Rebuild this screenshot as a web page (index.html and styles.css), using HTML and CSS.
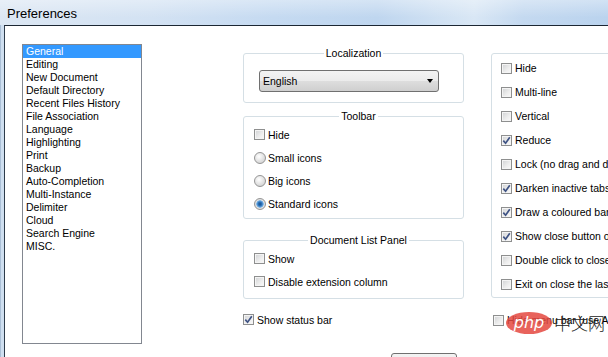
FILE: index.html
```html
<!DOCTYPE html>
<html lang="en">
  <head>
    <meta charset="UTF-8" />
    <title>Preferences</title>
    <link rel="stylesheet" href="styles.css">
  </head>
  <body>
    <div class="window">
      <div class="titlebar">Preferences</div>
      <div class="frame">
        <div class="client">
          <ul class="pages">
            <li class="current">General</li>
            <li>Editing</li>
            <li>New Document</li>
            <li>Default Directory</li>
            <li>Recent Files History</li>
            <li>File Association</li>
            <li>Language</li>
            <li>Highlighting</li>
            <li>Print</li>
            <li>Backup</li>
            <li>Auto-Completion</li>
            <li>Multi-Instance</li>
            <li>Delimiter</li>
            <li>Cloud</li>
            <li>Search Engine</li>
            <li>MISC.</li>
          </ul>

          <div class="col mid">
            <div class="group loc">
              <div class="caption">Localization</div>
              <div class="select">
                <span>English</span>
                <span class="arrow"></span>
              </div>
            </div>

            <div class="group toolbar">
              <div class="caption">Toolbar</div>
              <div class="row"><span class="cb"></span>Hide</div>
              <div class="row"><span class="rb"></span>Small icons</div>
              <div class="row"><span class="rb"></span>Big icons</div>
              <div class="row"><span class="rb on"></span>Standard icons</div>
            </div>

            <div class="group doclist">
              <div class="caption">Document List Panel</div>
              <div class="row"><span class="cb"></span>Show</div>
              <div class="row"><span class="cb"></span>Disable extension column</div>
            </div>

            <div class="row single"><span class="cb on"><svg viewBox="0 0 9 9"><path d="M1.3 4.6 L3.6 7.2 L7.8 1.3"/></svg></span>Show status bar</div>

            <div class="buttons"><button class="btn">Close</button></div>
          </div>

          <div class="col right">
            <div class="group tabbar">
              <div class="row"><span class="cb"></span>Hide</div>
              <div class="row"><span class="cb"></span>Multi-line</div>
              <div class="row"><span class="cb"></span>Vertical</div>
              <div class="row"><span class="cb on"><svg viewBox="0 0 9 9"><path d="M1.3 4.6 L3.6 7.2 L7.8 1.3"/></svg></span>Reduce</div>
              <div class="row"><span class="cb"></span>Lock (no drag and drop)</div>
              <div class="row"><span class="cb on"><svg viewBox="0 0 9 9"><path d="M1.3 4.6 L3.6 7.2 L7.8 1.3"/></svg></span>Darken inactive tabs</div>
              <div class="row"><span class="cb on"><svg viewBox="0 0 9 9"><path d="M1.3 4.6 L3.6 7.2 L7.8 1.3"/></svg></span>Draw a coloured bar on active tab</div>
              <div class="row"><span class="cb on"><svg viewBox="0 0 9 9"><path d="M1.3 4.6 L3.6 7.2 L7.8 1.3"/></svg></span>Show close button on each tab</div>
              <div class="row"><span class="cb"></span>Double click to close document</div>
              <div class="row"><span class="cb"></span>Exit on close the last tab</div>
            </div>
            <div class="row single"><span class="cb"></span>Hide menu bar (use Alt or F10 key to toggle)</div>
          </div>
        </div>
      </div>
    </div>

    <div class="watermark"><span class="php">php</span><span class="cn">中文网</span></div>
  </body>
</html>
```

FILE: styles.css
```css
body {
  margin: 0;
  width: 608px;
  height: 357px;
  overflow: hidden;
  font-family: "Liberation Sans", Arial, sans-serif;
  font-size: 10.5px;
  color: #000;
  background: #fff;
}

.window {
  width: 608px;
  height: 357px;
  overflow: hidden;
}

.titlebar {
  height: 25px;
  line-height: 27px;
  padding-left: 7px;
  font-size: 13px;
  color: #000;
  background:
    linear-gradient(to bottom, rgba(255, 255, 255, 0.35), rgba(255, 255, 255, 0) 70%),
    linear-gradient(to right, #dce7f3 0%, #d3e2f3 25%, #c5daf1 45%, #bfd6ef 62%, #d9e7f5 78%, #c4d9f0 86%, #bad3ee 100%);
}

.frame {
  background: linear-gradient(to right, #aabfd6 0, #aabfd6 1px, #cfdff0 1px);
  padding-left: 4px;
}

.client {
  display: flex;
  align-items: flex-start;
  height: 331px;
  padding: 18px 0 0 17px;
  background: #fff;
  border-left: 1px solid #2d3b4b;
  border-top: 1px solid #1c2733;
}

.pages {
  flex: none;
  list-style: none;
  margin: 0;
  padding: 0;
  width: 118px;
  height: 298px;
  border: 1px solid #828790;
  line-height: 13px;
}

.pages li {
  padding-left: 3px;
  white-space: nowrap;
}

.pages .current {
  background: #3399ff;
  color: #fff;
}

.col {
  flex: none;
  margin-top: 9px;
}

.mid {
  width: 221px;
  margin-left: 101px;
}

.right {
  width: 300px;
  margin-left: 27px;
}

.group {
  border: 1px solid #d5dfe5;
  border-radius: 3px;
}

.caption {
  display: table;
  margin: -7px auto 0;
  padding: 0 2px;
  line-height: 13px;
  background: #fff;
}

.loc {
  padding-bottom: 10px;
}

.select {
  display: flex;
  align-items: center;
  justify-content: space-between;
  box-sizing: border-box;
  width: 180px;
  height: 22px;
  margin: 10px 0 0 15px;
  padding: 0 4px 0 3px;
  border: 1px solid #707070;
  border-radius: 3px;
  background: linear-gradient(to bottom, #f3f3f3 0%, #ebebeb 50%, #dddddd 51%, #cfcfcf 100%);
}

.arrow {
  width: 0;
  height: 0;
  margin-right: 1px;
  border-left: 3.5px solid transparent;
  border-right: 3.5px solid transparent;
  border-top: 4px solid #000;
}

.toolbar {
  margin-top: 13px;
  padding: 0 0 3px 10px;
}

.doclist {
  margin-top: 21px;
  padding: 0 0 5px 10px;
}

.row {
  display: flex;
  align-items: center;
  height: 23px;
  white-space: nowrap;
}

.mid .single {
  margin-top: 9px;
}

.tabbar {
  padding: 2px 0 1px 9px;
}

.tabbar .row,
.right .single {
  height: 24px;
}

.right .single {
  margin-top: 10px;
  padding-left: 2px;
}

.cb {
  flex: none;
  box-sizing: border-box;
  width: 11px;
  height: 11px;
  margin-right: 3px;
  border: 1px solid #8e8f8f;
  background: linear-gradient(135deg, #cfd1d3 0%, #eeeeee 60%, #fafafa 100%);
  box-shadow: inset 0 0 0 1px #f4f4f4;
}

.cb svg {
  display: block;
  width: 9px;
  height: 9px;
}

.cb path {
  fill: none;
  stroke: #3f5384;
  stroke-width: 1.7;
}

.rb {
  flex: none;
  box-sizing: border-box;
  width: 12px;
  height: 12px;
  margin-right: 2px;
  border: 1px solid #959595;
  border-radius: 50%;
  background: radial-gradient(circle at 40% 35%, #ffffff 0%, #e6e6e6 45%, #c8c8c8 100%);
}

.rb.on {
  background: radial-gradient(circle at 50% 50%, #174c86 0, #2d75bd 2px, #7fb6e6 3.5px, #e4e4e4 4px, #cdcdcd 100%);
}

.buttons {
  display: flex;
  justify-content: flex-end;
  margin-top: 22px;
  padding-right: 7px;
}

.btn {
  width: 66px;
  height: 23px;
  font-family: "Liberation Sans", Arial, sans-serif;
  font-size: 10.5px;
  border: 1px solid #707070;
  border-radius: 3px;
  background: linear-gradient(to bottom, #f3f3f3 0%, #ebebeb 50%, #dddddd 51%, #cfcfcf 100%);
}

/* site watermark laid over the screenshot */
.watermark {
  position: absolute;
  left: 506px;
  top: 310px;
  display: flex;
  align-items: center;
}

.php {
  width: 46px;
  height: 22px;
  border-radius: 50%;
  background: rgba(228, 72, 64, 0.85);
  color: #fff;
  font-family: "DejaVu Sans", sans-serif;
  font-style: italic;
  font-size: 16px;
  line-height: 21px;
  text-align: center;
}

.cn {
  margin-left: 2px;
  font-family: "Noto Sans CJK SC", sans-serif;
  font-size: 17px;
  font-weight: 300;
  color: #222;
}
```
